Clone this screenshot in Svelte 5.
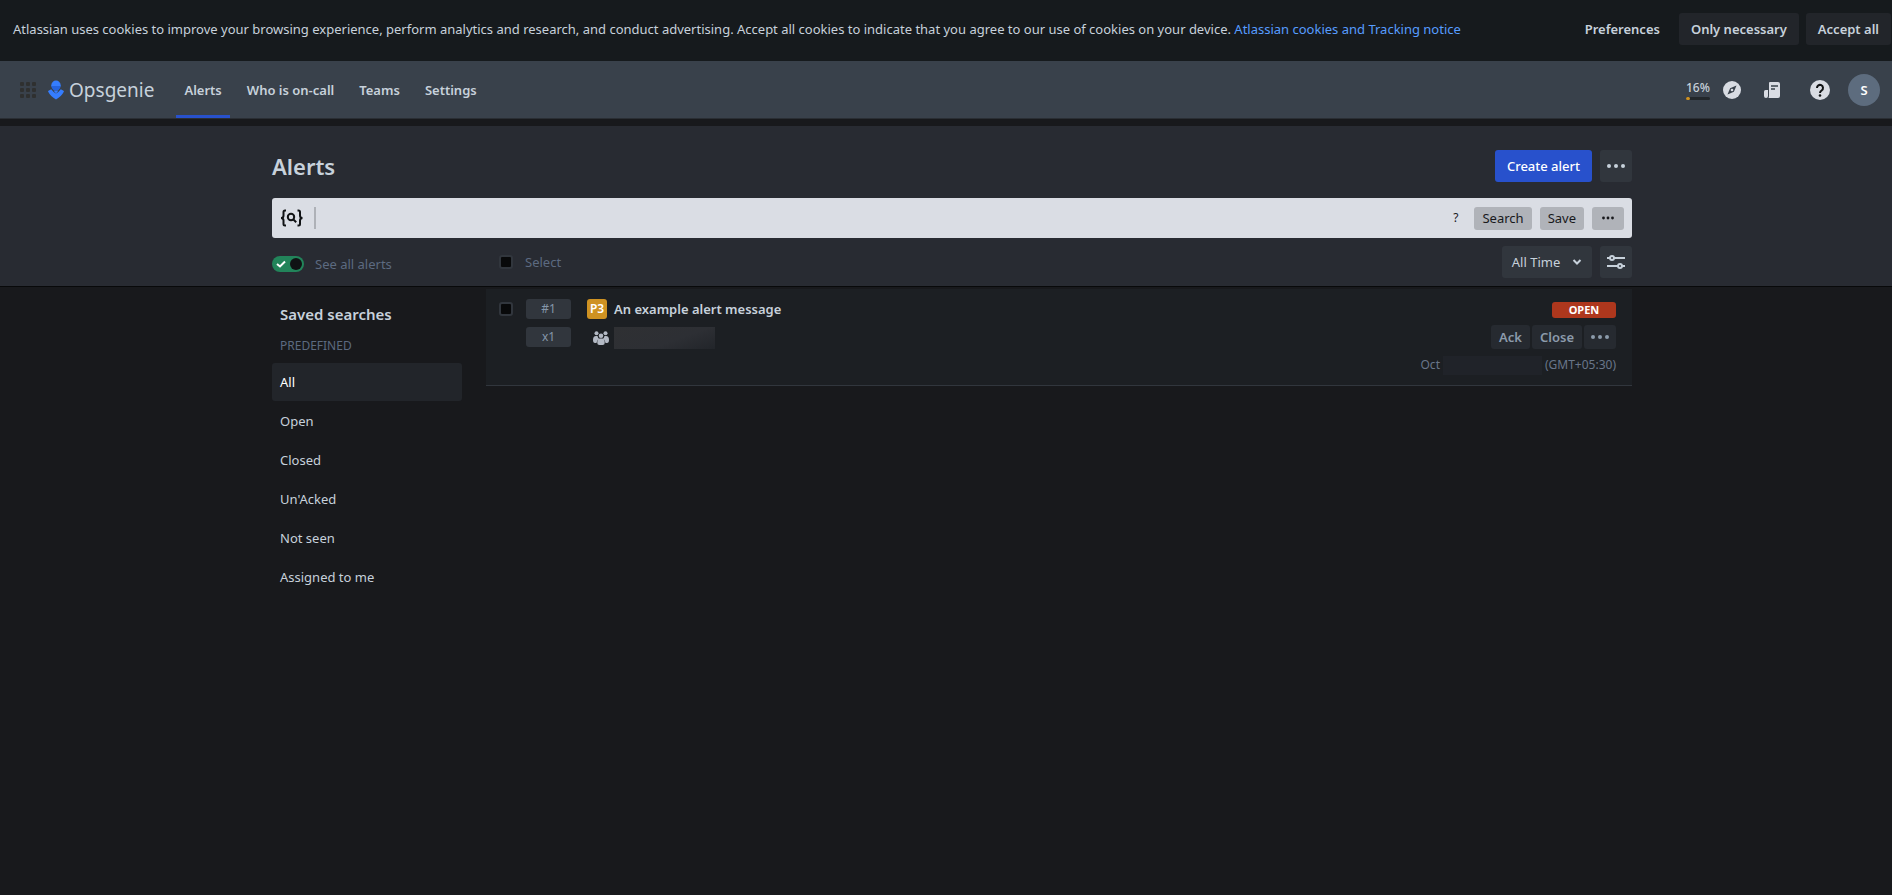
<script lang="ts">
  const navItems = ["Alerts", "Who is on-call", "Teams", "Settings"];
  const searches = ["All", "Open", "Closed", "Un'Acked", "Not seen", "Assigned to me"];
  const dots = [0, 1, 2, 3, 4, 5, 6, 7, 8];

  let activeNav = $state("Alerts");
  let activeSearch = $state("All");
  let query = $state("");
  let seeAll = $state(true);
</script>

{#snippet more()}
  <svg class="more" width="20" height="6" viewBox="0 0 20 6" fill="currentColor" aria-hidden="true">
    <circle cx="3" cy="3" r="2" /><circle cx="10" cy="3" r="2" /><circle cx="17" cy="3" r="2" />
  </svg>
{/snippet}

<div class="cookies">
  <p>
    Atlassian uses cookies to improve your browsing experience, perform analytics and research, and conduct advertising. Accept all cookies to indicate that you agree to our use of cookies on your device.
    <a href="#cookies">Atlassian cookies and Tracking notice</a>
  </p>
  <div class="cookie-actions">
    <button class="plain">Preferences</button>
    <button>Only necessary</button>
    <button>Accept all</button>
  </div>
</div>

<header class="topbar">
  <button class="switcher" aria-label="Switch to">
    <svg width="16" height="16" viewBox="0 0 16 16" fill="#2f3030">
      {#each dots as d}
        <rect x={(d % 3) * 6} y={Math.floor(d / 3) * 6} width="4" height="4" rx="1" />
      {/each}
    </svg>
  </button>
  <a class="brand" href="#home">
    <svg width="16" height="20" viewBox="0 0 16 20" aria-hidden="true">
      <circle cx="8" cy="5.300" r="4.700" fill="#357dff" />
      <path d="M3.500 6h9a4.500 4.500 0 0 1-9 0z" fill="#2463e0" />
      <path d="M3.200 9.200Q5 11.800 8 13.400 11 11.800 12.800 9.200l2.700 1.500q.6.400.3 1.100Q13.500 16.500 8 19.500 2.500 16.500.2 11.800q-.3-.7.300-1.100z" fill="#357dff" />
      <path d="M5.500 10.500h5L8 13.400z" fill="#357dff" />
    </svg>
    <span>Opsgenie</span>
  </a>
  <nav>
    {#each navItems as item}
      <a href="#{item}" class={activeNav === item ? "active" : ""} onclick={() => (activeNav = item)}>{item}</a>
    {/each}
  </nav>
  <div class="tools">
    <div class="progress">
      <span>16%</span>
      <div class="track"><div class="fill" style="width: 16%"></div></div>
    </div>
    <button class="compass" aria-label="Getting started">
      <svg width="18" height="18" viewBox="0 0 18 18">
        <circle cx="9" cy="9" r="9" fill="#d9dce3" />
        <path d="M13.500 4.500l-2.600 6.200-6.400 2.800 2.600-6.200z" fill="#39414b" />
        <circle cx="9" cy="9" r="1.300" fill="#d9dce3" />
      </svg>
    </button>
    <button class="news" aria-label="What's new">
      <svg width="16" height="16" viewBox="0 0 16 16" fill="#d9dce3">
        <path d="M6 0h8q2 0 2 2v12q0 2-2 2H4.500q.5-.8.500-2V1q0-1 1-1z" />
        <path d="M0 9.500Q0 8 1.500 8H4v6q0 2-2 2t-2-2z" />
        <path d="M7 4h7M7 7h4" stroke="#39414b" stroke-width="1.500" />
      </svg>
    </button>
    <button class="help" aria-label="Help">
      <svg width="20" height="20" viewBox="0 0 20 20">
        <circle cx="10" cy="10" r="10" fill="#d9dce3" />
        <path d="M7 8a3 3 0 1 1 4.800 2.300Q10 11.300 10 13" fill="none" stroke="#101214" stroke-width="2" />
        <circle cx="10" cy="15.500" r="1.300" fill="#101214" />
      </svg>
    </button>
    <button class="avatar" aria-label="Profile">S</button>
  </div>
</header>

<section class="page-head">
  <div class="container">
    <div class="title-row">
      <h1>Alerts</h1>
      <button class="primary">Create alert</button>
      <button class="square" aria-label="More actions">{@render more()}</button>
    </div>
    <form class="search" onsubmit={(e) => e.preventDefault()}>
      <svg width="24" height="18" viewBox="0 0 24 18" fill="none" stroke="#101214" stroke-width="2" aria-hidden="true">
        <path d="M6 1.500H5Q3.500 1.500 3.500 3v3.500Q3.500 9 1 9q2.500 0 2.500 2.500V15q0 1.500 1.500 1.500h1M17.500 1.500h1Q20 1.500 20 3v3.500Q20 9 22.500 9 20 9 20 11.500V15q0 1.500-1.500 1.500h-1" />
        <circle cx="11" cy="8" r="3.200" />
        <path d="M13.200 10.200l3 3" />
      </svg>
      <input type="text" aria-label="Search query" bind:value={query} />
      <button type="button" class="hint" aria-label="Search help">?</button>
      <button>Search</button>
      <button type="button">Save</button>
      <button type="button" class="dots" aria-label="More search options">
        <svg width="12" height="4" viewBox="0 0 12 4" fill="currentColor"><circle cx="1.500" cy="2" r="1.400" /><circle cx="6" cy="2" r="1.400" /><circle cx="10.500" cy="2" r="1.400" /></svg>
      </button>
    </form>
    <div class="filters">
      <label class="see-all">
        <input type="checkbox" class="toggle" bind:checked={seeAll} />
        <svg class="tick" width="10" height="8" viewBox="0 0 10 8" fill="none" stroke="#fff" stroke-width="2"><path d="M1 4l3 2.500L9 1.500" /></svg>
        <span>See all alerts</span>
      </label>
      <label class="select-all"><input type="checkbox" class="check" /><span>Select</span></label>
      <button class="range">
        All Time
        <svg width="10" height="6" viewBox="0 0 10 6" fill="none" stroke="currentColor" stroke-width="2"><path d="M1.500 1L5 4.500 8.500 1" /></svg>
      </button>
      <button class="square" aria-label="Display options">
        <svg width="18" height="14" viewBox="0 0 18 14" fill="none" stroke="currentColor" stroke-width="2">
          <path d="M0 3h3M7 3h11M0 11h11M15 11h3" /><circle cx="5" cy="3" r="2" /><circle cx="13" cy="11" r="2" />
        </svg>
      </button>
    </div>
  </div>
</section>

<main class="container body">
  <aside>
    <h2>Saved searches</h2>
    <h3>PREDEFINED</h3>
    <ul>
      {#each searches as item}
        <li>
          <button class={activeSearch === item ? "active" : ""} onclick={() => (activeSearch = item)}>{item}</button>
        </li>
      {/each}
    </ul>
  </aside>

  <article class="alert">
    <input type="checkbox" class="check" aria-label="Select alert #1" />
    <div class="tags">
      <span class="tag">#1</span>
      <span class="tag">x1</span>
    </div>
    <div class="info">
      <div class="line">
        <span class="priority">P3</span>
        <a href="#alert">An example alert message</a>
      </div>
      <div class="line">
        <svg class="team" width="16" height="14" viewBox="0 0 16 14" fill="#b3b9c4" aria-hidden="true">
          <circle cx="3.500" cy="2.200" r="2" /><circle cx="12.500" cy="2.200" r="2" />
          <circle cx="8" cy="4.800" r="2.300" />
          <path d="M0 9q0-4 3-4h1.500Q5 7 6 7.500 4 8.500 3.500 12H2q-2 0-2-3zM16 9q0-4-3-4h-1.500Q11 7 10 7.500q2 1 2.500 4.500H14q2 0 2-3z" />
          <path d="M4.300 11Q4.300 7.600 7 7.600h2q2.700 0 2.700 3.400v1q0 2-2 2H6.300q-2 0-2-2z" />
        </svg>
        <span class="redacted team-name"></span>
      </div>
    </div>
    <div class="state">
      <span class="status">OPEN</span>
      <div class="actions">
        <button>Ack</button>
        <button>Close</button>
        <button class="dots" aria-label="More alert actions">{@render more()}</button>
      </div>
      <div class="date">Oct <span class="redacted when"></span> (GMT+05:30)</div>
    </div>
  </article>
</main>

<style>
  :global(body) {
    background: #18191c;
    color: #c7d1db;
    font-family: "Noto Sans", "Open Sans", sans-serif;
    font-size: 13px;
    line-height: 20px;
  }

  :global(*) {
    box-sizing: border-box;
  }

  h1, h2, h3, p, ul {
    margin: 0;
    padding: 0;
    font-weight: 400;
  }

  ul {
    list-style: none;
  }

  a {
    color: inherit;
    text-decoration: none;
  }

  button {
    display: flex;
    align-items: center;
    justify-content: center;
    flex: none;
    border: 0;
    border-radius: 3px;
    padding: 0;
    background: none;
    color: inherit;
    font: inherit;
    white-space: nowrap;
    cursor: pointer;
  }

  .cookies {
    display: flex;
    align-items: center;
    justify-content: space-between;
    min-height: 61px;
    padding: 0 1px 3px 13px;
    background: #161a1d;
  }

  .cookies a {
    color: #579dff;
  }

  .cookie-actions {
    display: flex;
    gap: 7px;
  }

  .cookie-actions button {
    height: 32px;
    padding: 0 12px;
    background: #22252a;
    font-weight: 600;
  }

  .cookie-actions .plain {
    background: none;
  }

  .topbar {
    display: flex;
    align-items: center;
    height: 58px;
    padding: 0 12px 0 20px;
    background: #39414b;
    border-bottom: 1px solid #2a2e34;
  }

  .brand {
    display: flex;
    align-items: center;
    gap: 5px;
    margin: 0 22px 0 12px;
    font-size: 19px;
  }

  nav {
    display: flex;
    gap: 9px;
    height: 100%;
    font-weight: 600;
  }

  nav a {
    display: flex;
    align-items: center;
    padding: 3px 8px 0;
    border-bottom: 3px solid transparent;
  }

  nav a.active {
    border-color: #2851cc;
  }

  .tools {
    display: flex;
    align-items: center;
    margin-left: auto;
  }

  .progress {
    width: 24px;
    font-size: 12px;
    font-weight: 500;
  }

  .progress span {
    display: block;
    line-height: 18px;
  }

  .track {
    height: 3px;
    border-radius: 2px;
    background: #22272b;
  }

  .fill {
    height: 3px;
    border-radius: 2px;
    background: #cf9222;
  }

  .compass {
    margin-left: 13px;
  }

  .news {
    margin-left: 23px;
  }

  .help {
    margin-left: 30px;
  }

  .avatar {
    width: 32px;
    height: 32px;
    margin-left: 18px;
    border-radius: 50%;
    background: #5d6c7e;
    color: #fff;
    font-weight: 600;
  }

  .container {
    width: 100%;
    max-width: 1360px;
    margin: 0 auto;
  }

  .page-head {
    padding: 24px 0 8px 12px;
    border-top: 7px solid #18191c;
    border-bottom: 1px solid #08090a;
    background: #282b32;
  }

  .title-row {
    display: flex;
    align-items: center;
    gap: 8px;
  }

  h1 {
    flex: 1;
    font-size: 22px;
    font-weight: 600;
    line-height: 32px;
  }

  .primary {
    height: 32px;
    padding: 0 12px;
    background: #2851cc;
    color: #fff;
    font-weight: 500;
  }

  .square {
    width: 32px;
    height: 32px;
    background: #31363d;
  }

  .search {
    display: flex;
    align-items: center;
    height: 40px;
    margin-top: 16px;
    padding: 0 8px;
    border-radius: 3px;
    background: #dadde4;
    color: #18191c;
  }

  .search input {
    flex: 1;
    height: 22px;
    margin-left: 10px;
    padding: 0 8px;
    border: 0;
    border-left: 2px solid #aeb1b7;
    background: none;
    font: inherit;
    outline: none;
  }

  .search button {
    height: 23px;
    margin-left: 8px;
    padding: 0 8px;
    background: #b0b3b9;
  }

  .search .hint {
    background: none;
    font-size: 12px;
  }

  .search .dots {
    width: 32px;
  }

  .filters {
    display: flex;
    align-items: center;
    gap: 8px;
    margin-top: 8px;
    color: #5c6a80;
  }

  .filters button {
    color: #c7d1db;
  }

  label {
    display: flex;
    align-items: center;
    position: relative;
  }

  .see-all {
    width: 219px;
    gap: 11px;
    padding-top: 4px;
  }

  .toggle {
    appearance: none;
    display: flex;
    align-items: center;
    justify-content: flex-end;
    width: 32px;
    height: 16px;
    margin: 0;
    padding: 2px;
    border-radius: 8px;
    background: #22845a;
  }

  .toggle::after {
    content: "";
    width: 12px;
    height: 12px;
    border-radius: 50%;
    background: #101214;
  }

  .toggle:not(:checked) {
    justify-content: flex-start;
    background: #596474;
  }

  /* sits on the toggle */
  .tick {
    position: absolute;
    left: 4px;
  }

  .check {
    appearance: none;
    flex: none;
    width: 14px;
    height: 14px;
    margin: 0;
    border: 2px solid #31363d;
    border-radius: 3px;
    background: #08090a;
  }

  .select-all {
    flex: 1;
    gap: 12px;
  }

  .range {
    gap: 12px;
    width: 90px;
    height: 32px;
    background: #31363d;
  }

  .body {
    display: flex;
    align-items: flex-start;
    gap: 24px;
    padding-top: 2px;
    /* follows the head, which is padded on the left only */
    max-width: 1372px;
    padding-left: 12px;
  }

  aside {
    flex: none;
    width: 190px;
    padding-top: 15px;
  }

  h2 {
    padding: 0 8px;
    font-size: 15px;
    font-weight: 600;
  }

  h3 {
    padding: 12px 8px 7px;
    color: #5c6a80;
    font-size: 12px;
  }

  li button {
    justify-content: flex-start;
    width: 100%;
    height: 38px;
    margin-bottom: 1px;
    padding: 0 8px;
  }

  li .active {
    background: #22252a;
    color: #fff;
  }

  .alert {
    display: flex;
    flex: 1;
    align-items: flex-start;
    min-height: 97px;
    padding: 10px 16px 9px 13px;
    border-bottom: 1px solid #31363d;
    background: #1c1f23;
  }

  .alert .check {
    margin: 3px 13px 0 0;
  }

  .tags {
    display: flex;
    flex-direction: column;
    gap: 8px;
    margin-right: 16px;
  }

  .tag {
    width: 45px;
    border-radius: 3px;
    background: #31363d;
    color: #8596aa;
    font-size: 12px;
    text-align: center;
  }

  .info {
    display: flex;
    flex: 1;
    flex-direction: column;
    gap: 8px;
    font-weight: 600;
  }

  .line {
    display: flex;
    align-items: center;
    gap: 7px;
  }

  .priority {
    width: 20px;
    border-radius: 3px;
    background: #cf9222;
    color: #fff;
    font-size: 12px;
    text-align: center;
  }

  .team {
    margin: 0 -2px 0 6px;
  }

  .redacted {
    display: inline-block;
    background: linear-gradient(160deg, #2f3033, #2d2f34 60%, #22252a);
  }

  .team-name {
    width: 101px;
    height: 22px;
  }

  .state {
    display: flex;
    flex-direction: column;
    align-items: flex-end;
  }

  .status {
    width: 64px;
    margin-top: 3px;
    border-radius: 3px;
    background: #ae371d;
    color: #fff;
    font-size: 11px;
    font-weight: 700;
    line-height: 16px;
    text-align: center;
  }

  .actions {
    display: flex;
    gap: 2px;
    margin-top: 7px;
    color: #8c9bab;
    font-weight: 600;
  }

  .actions button {
    height: 24px;
    padding: 0 8px;
    background: #262a30;
  }

  .actions .dots {
    width: 32px;
    padding: 0;
  }

  .date {
    display: flex;
    align-items: center;
    gap: 3px;
    margin-top: 6px;
    color: #69768a;
    font-size: 12px;
  }

  .when {
    width: 99px;
    height: 19px;
    background: #202329;
  }
</style>
